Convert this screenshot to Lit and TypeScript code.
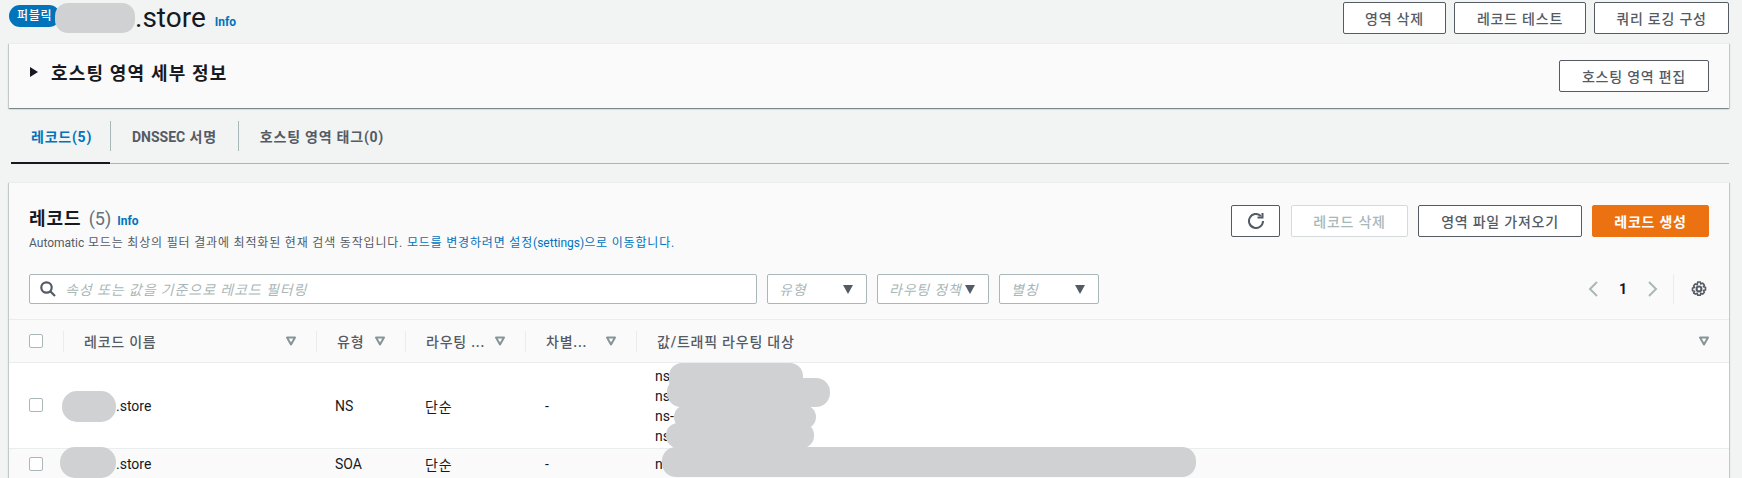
import { LitElement, css, html, svg } from "lit";
import { customElement } from "lit/decorators.js";

// redacted areas painted over the screenshot: x, y, w, h, radius
const BLOBS = [
  [55, 3, 80, 30, 13],
  [62, 391, 54, 31, 15],
  [60, 447, 56, 31, 15],
  [669, 363, 134, 30, 13],
  [667, 378, 163, 29, 14],
  [674, 405, 142, 24, 12],
  [666, 423, 148, 25, 12],
  [662, 447, 534, 30, 14],
];

const COLUMNS = ["레코드 이름", "유형", "라우팅 ...", "차별...", "값/트래픽 라우팅 대상"];

const caret = html`<svg class="caret" viewBox="0 0 10 10" width="10" height="10">
  <path d="M1 1.5h8L5 8.5z" fill="none" stroke="#879596" stroke-width="2" stroke-linejoin="round" />
</svg>`;

const arrow = html`<svg class="arrow" viewBox="0 0 10 9" width="10" height="9">
  <path d="M0 0h10L5 9z" fill="#545b64" />
</svg>`;

@customElement("app-root")
export class AppRoot extends LitElement {
  static styles = css`
    :host {
      display: block;
      position: relative;
      height: 478px;
      overflow: hidden;
      background: #f2f3f3;
      color: #16191f;
      font-family: Roboto, "Noto Sans CJK KR", sans-serif;
      font-size: 14px;
    }
    /* hangul runs wider in the reference than in the installed font */
    * { letter-spacing: 0.055em; }
    .en, .en * { letter-spacing: 0; }
    .link { color: #0073bb; }
    .top {
      display: flex;
      justify-content: space-between;
      height: 43px;
      padding: 2px 13px 0 9px;
      box-sizing: border-box;
    }
    .title { display: flex; align-items: center; height: 32px; }
    .badge {
      width: 51px;
      height: 22px;
      margin-top: -4px;
      box-sizing: border-box;
      padding-left: 8px;
      border-radius: 11px;
      background: #0073bb;
      color: #fff;
      font-size: 12px;
      font-weight: 500;
      line-height: 22px;
    }
    .name { margin-left: 75px; font-size: 28px; line-height: 32px; }
    .info { font-size: 12px; font-weight: 700; color: #0073bb; }
    .name + .info { margin: 7px 0 0 9px; }
    .btns { display: flex; gap: 8px; }
    .btn {
      display: flex;
      align-items: center;
      justify-content: center;
      height: 32px;
      box-sizing: border-box;
      border: 1px solid #545b64;
      border-radius: 2px;
      background: #fff;
      color: #545b64;
      font-size: 14px;
      font-weight: 500;
    }
    .panel {
      margin: 0 13px 0 9px;
      background: #fafafa;
      border-top: 1px solid #eaeded;
      box-shadow: 0 1px 1px 0 rgba(0, 28, 36, 0.3), 1px 1px 1px 0 rgba(0, 28, 36, 0.15),
        -1px 1px 1px 0 rgba(0, 28, 36, 0.15);
    }
    .details {
      display: flex;
      align-items: center;
      justify-content: space-between;
      height: 64px;
      padding: 0 20px 0 21px;
    }
    .details h2 {
      display: flex;
      align-items: center;
      gap: 13px;
      margin: -8px 0 0;
      font-size: 18px;
      font-weight: 700;
      letter-spacing: 0.065em;
    }
    .tabs {
      display: flex;
      height: 56px;
      margin: 0 13px 18px 11px;
      box-sizing: border-box;
      border-bottom: 1px solid #aab7b8;
    }
    .tab {
      position: relative;
      display: flex;
      align-items: center;
      height: 30px;
      margin-top: 13px;
      padding: 0 21px;
      color: #545b64;
      font-weight: 700;
      white-space: nowrap;
    }
    .tab + .tab { border-left: 1px solid #aab7b8; }
    .tab.on { width: 99px; box-sizing: border-box; padding-left: 20px; color: #0073bb; }
    .tab.on::after {
      content: "";
      position: absolute;
      left: 0;
      right: 0;
      bottom: -13px;
      height: 2px;
      background: #16191f;
    }
    .records { height: 300px; }
    .head {
      display: flex;
      justify-content: space-between;
      padding: 22px 20px 0 20px;
    }
    .head h2 {
      display: flex;
      align-items: baseline;
      height: 28px;
      margin: 0;
      font-size: 18px;
      font-weight: 700;
      line-height: 28px;
    }
    .count { margin-left: 7px; color: #687078; font-weight: 400; }
    .head .info { margin-left: 6px; }
    .desc { font-size: 12px; line-height: 20px; color: #545b64; }
    .desc, .desc .link { letter-spacing: 0.068em; }
    .desc .en { letter-spacing: 0; }
    .actions { gap: 10px; }
    .refresh { width: 49px; margin-right: 1px; }
    .off { border-color: #d5dbdb; color: #aab7b8; }
    .primary { border-color: #ec7211; background: #ec7211; color: #fff; font-weight: 700; }
    .filters {
      display: flex;
      align-items: center;
      gap: 10px;
      height: 30px;
      margin-top: 21px;
      padding: 0 22px 0 20px;
    }
    .field {
      display: flex;
      align-items: center;
      justify-content: space-between;
      height: 30px;
      box-sizing: border-box;
      padding: 0 13px 0 11px;
      border: 1px solid #aab7b8;
      border-radius: 2px;
      background: #fff;
      color: #aab7b8;
      font-style: italic;
    }
    .search { justify-content: flex-start; gap: 9px; width: 728px; padding-left: 10px; letter-spacing: 0.065em; }
    .pager { display: flex; align-items: center; margin-left: auto; height: 30px; color: #16191f; }
    .page { width: 50px; text-align: center; font-weight: 700; }
    .gear {
      display: flex;
      align-items: center;
      height: 30px;
      margin-left: 15px;
      padding-left: 17px;
      border-left: 1px solid #eaeded;
    }
    .table {
      display: grid;
      grid-template-columns: 54px 253px 89px 120px 111px 1fr;
      margin-top: 15px;
    }
    .th {
      position: relative;
      display: flex;
      align-items: center;
      justify-content: space-between;
      height: 44px;
      box-sizing: border-box;
      border-top: 1px solid #eaeded;
      border-bottom: 1px solid #eaeded;
      padding: 0 20px 0 21px;
      color: #545b64;
      font-weight: 500;
    }
    .th::before {
      content: "";
      position: absolute;
      left: 0;
      top: 11px;
      height: 21px;
      border-left: 1px solid #eaeded;
    }
    .th.first::before { display: none; }
    .td {
      display: flex;
      align-items: center;
      box-sizing: border-box;
      background: #fff;
      border-bottom: 1px solid #eaeded;
      padding-left: 20px;
    }
    .td.first, .th.first { padding: 0 0 0 20px; }
    .name-cell { padding-left: 53px; }
    .tight { padding-left: 19px; }
    .row1 { height: 86px; }
    .row1:not(.first) { padding-top: 1px; }
    .row1.first .box { margin-top: -2px; }
    .row2 { height: 30px; background: #fafafa; border-bottom: none; }
    .values { line-height: 20px; }
    .box {
      width: 14px;
      height: 14px;
      box-sizing: border-box;
      border: 1px solid #aab7b8;
      border-radius: 2px;
      background: #fff;
    }
    .masks { position: absolute; left: 0; top: 0; pointer-events: none; }
  `;

  render() {
    return html`
      <div class="top">
        <div class="title">
          <span class="badge">퍼블릭</span>
          <span class="name en">.store</span>
          <span class="info en">Info</span>
        </div>
        <div class="btns">
          <div class="btn" style="width:103px">영역 삭제</div>
          <div class="btn" style="width:132px">레코드 테스트</div>
          <div class="btn" style="width:135px">쿼리 로깅 구성</div>
        </div>
      </div>

      <section class="panel details">
        <h2>
          <svg viewBox="0 0 8 10" width="8" height="10"><path d="M0 0l8 5-8 5z" fill="#16191f" /></svg>
          호스팅 영역 세부 정보
        </h2>
        <div class="btn" style="width:150px">호스팅 영역 편집</div>
      </section>

      <nav class="tabs">
        <div class="tab on">레코드(5)</div>
        <div class="tab"><span><span class="en">DNSSEC</span> 서명</span></div>
        <div class="tab">호스팅 영역 태그(0)</div>
      </nav>

      <section class="panel records">
        <div class="head">
          <div>
            <h2>레코드 <span class="count en">(5)</span><span class="info en">Info</span></h2>
            <div class="desc">
              <span class="en">Automatic</span> 모드는 최상의 필터 결과에 최적화된 현재 검색 동작입니다.
              <span class="link">모드를 변경하려면 설정<span class="en">(settings)</span>으로 이동합니다.</span>
            </div>
          </div>
          <div class="btns actions">
            <div class="btn refresh">
              <svg viewBox="0 0 16 16" width="16" height="16" fill="none" stroke="#545b64" stroke-width="2">
                <path d="M15 8a7 7 0 1 1-2.2-5.1" />
                <path d="M9.5 4.5H14.5V-.5" />
              </svg>
            </div>
            <div class="btn off" style="width:117px">레코드 삭제</div>
            <div class="btn" style="width:164px">영역 파일 가져오기</div>
            <div class="btn primary" style="width:117px">레코드 생성</div>
          </div>
        </div>

        <div class="filters">
          <div class="field search">
            <svg viewBox="0 0 16 16" width="16" height="16" fill="none" stroke="#545b64" stroke-width="2.2">
              <circle cx="6.5" cy="6.5" r="5.2" />
              <path d="M10.5 10.5l4.5 4.5" />
            </svg>
            속성 또는 값을 기준으로 레코드 필터링
          </div>
          <div class="field" style="width:100px">유형 ${arrow}</div>
          <div class="field" style="width:112px">라우팅 정책${arrow}</div>
          <div class="field" style="width:100px">별칭 ${arrow}</div>
          <div class="pager">
            <svg viewBox="0 0 10 16" width="10" height="16" fill="none" stroke="#aab7b8" stroke-width="2"><path d="M9 1L2 8l7 7" /></svg>
            <span class="page en">1</span>
            <svg viewBox="0 0 10 16" width="10" height="16" fill="none" stroke="#aab7b8" stroke-width="2"><path d="M1 1l7 7-7 7" /></svg>
            <div class="gear">
              <svg viewBox="0 0 16 16" width="16" height="16" fill="none" stroke="#545b64">
                <circle cx="8" cy="8" r="2.4" stroke-width="2" />
                <path d="M6.7 1h2.6l.5 2 1.8-.9 1.8 1.9-1 1.7 2.1.6v2.6l-2.1.6 1 1.7-1.8 1.9-1.8-.9-.5 2H6.7l-.5-2-1.8.9L2.6 12l1-1.7-2.1-.6V7.1l2.1-.6-1-1.7L4.4 2.9l1.8.9z" stroke-width="1.6" stroke-linejoin="round" />
              </svg>
            </div>
          </div>
        </div>

        <div class="table">
          <div class="th first"><div class="box"></div></div>
          ${COLUMNS.map(label => html`<div class="th"><span>${label}</span>${caret}</div>`)}

          <div class="td first row1"><div class="box"></div></div>
          <div class="td row1 name-cell en">.store</div>
          <div class="td row1 tight en">NS</div>
          <div class="td row1">단순</div>
          <div class="td row1 en">-</div>
          <div class="td row1 values tight en"><div>ns-<br />ns-<br />ns-<br />ns-</div></div>

          <div class="td first row2"><div class="box"></div></div>
          <div class="td row2 name-cell en">.store</div>
          <div class="td row2 tight en">SOA</div>
          <div class="td row2">단순</div>
          <div class="td row2 en">-</div>
          <div class="td row2 tight en">ns-</div>
        </div>
      </section>

      <svg class="masks" width="1742" height="478">
        ${BLOBS.map(([x, y, w, h, r]) => svg`<rect x=${x} y=${y} width=${w} height=${h} rx=${r} fill="#d0d1d3" />`)}
      </svg>
    `;
  }
}
